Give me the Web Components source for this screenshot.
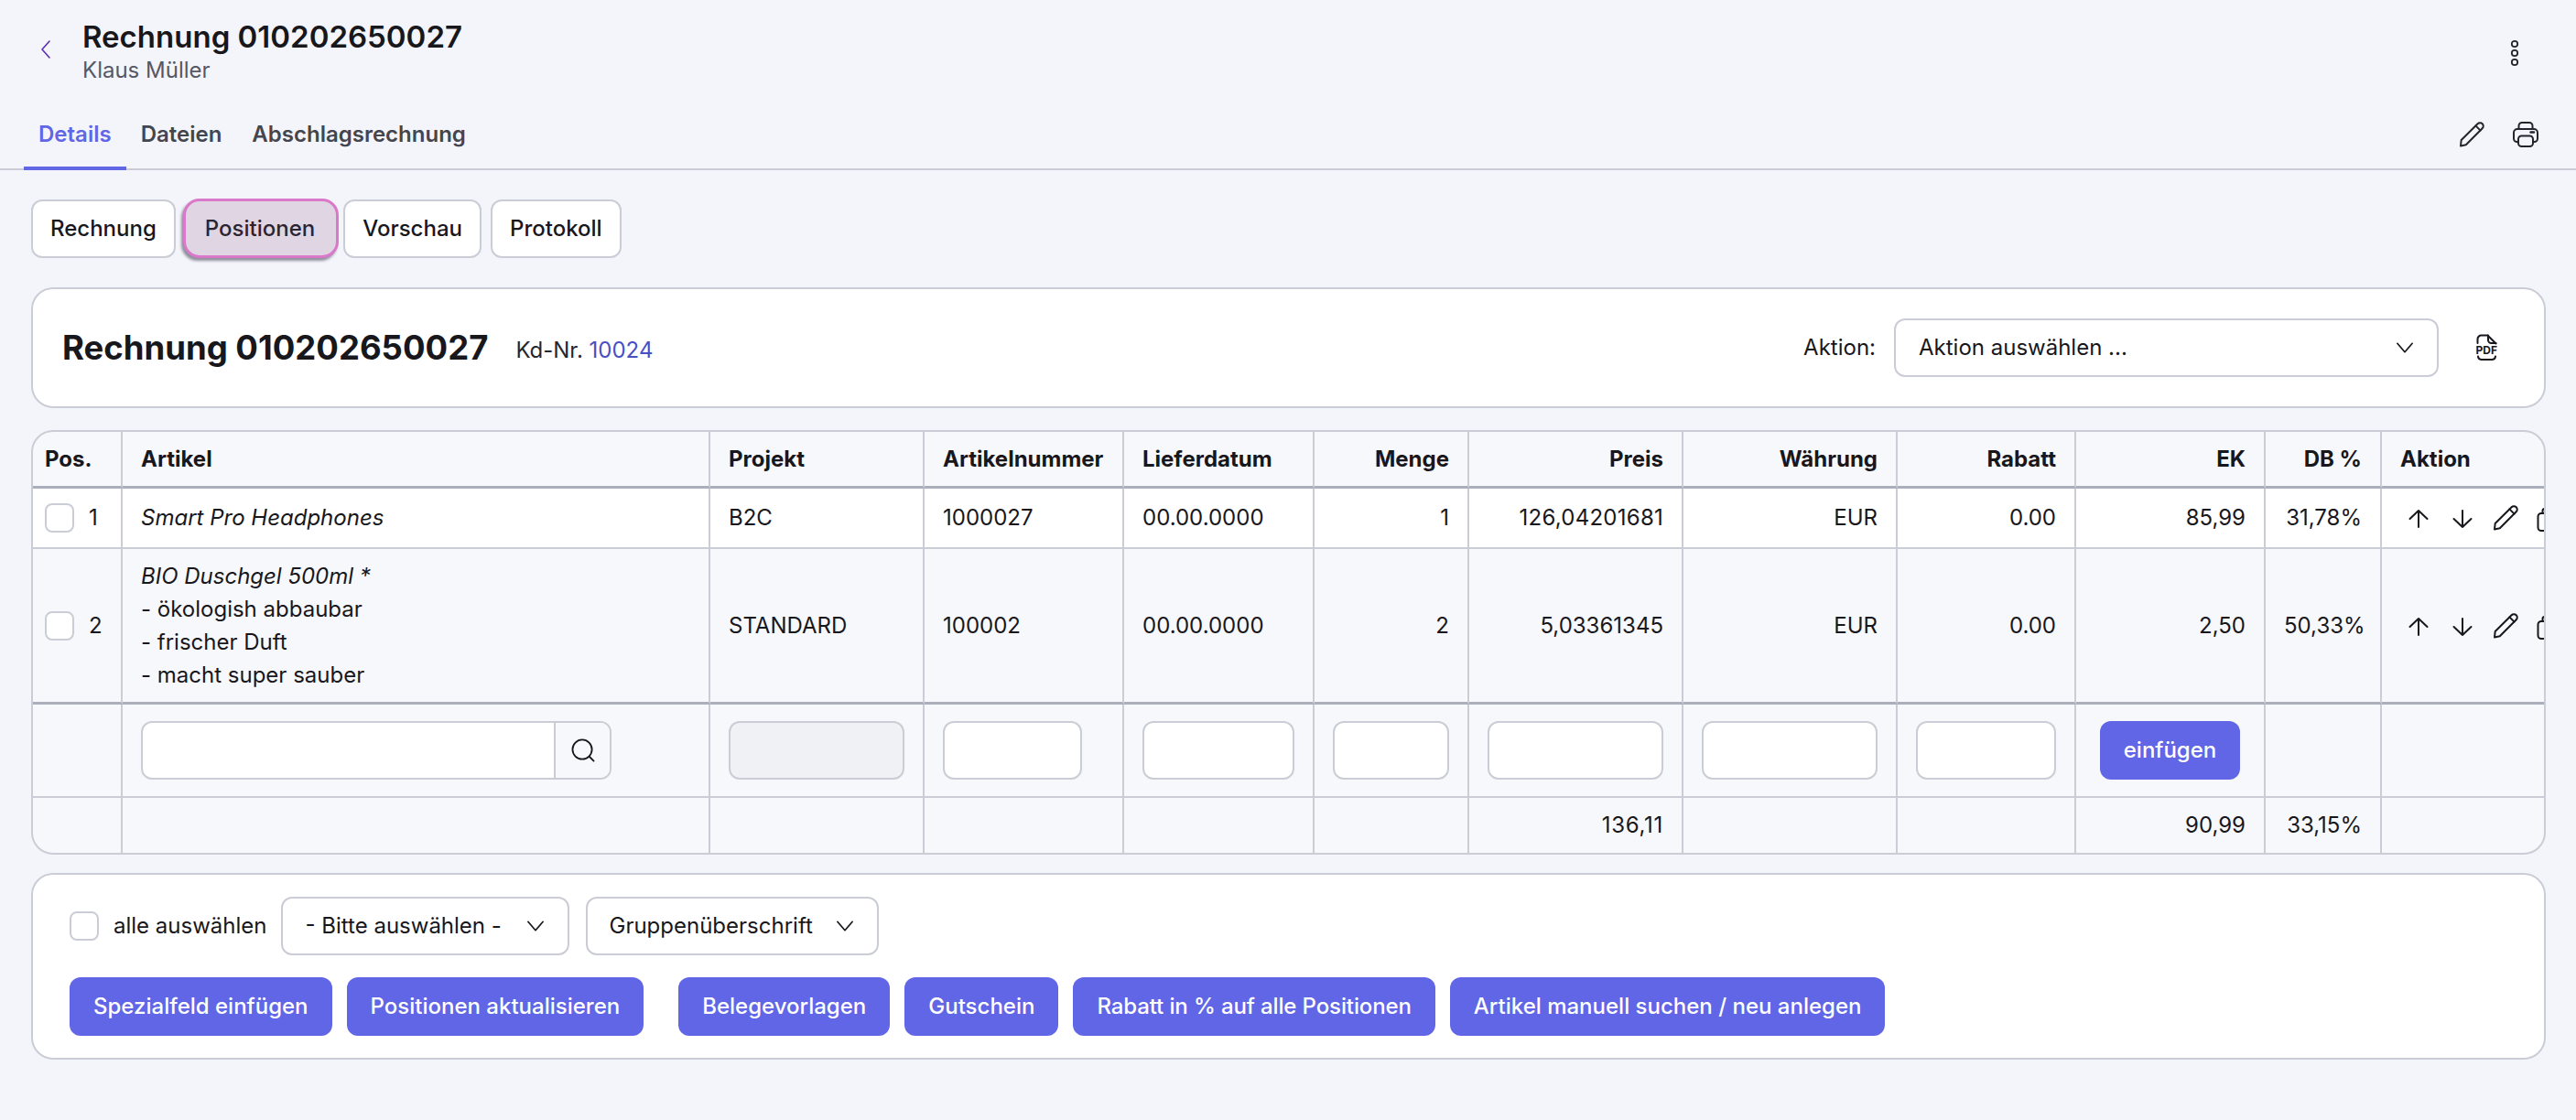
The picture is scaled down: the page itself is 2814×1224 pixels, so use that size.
<!DOCTYPE html>
<html lang="de">
<head>
<meta charset="utf-8">
<title>Rechnung 010202650027</title>
<style>
  html, body { margin: 0; padding: 0; }
  body {
    background: #f4f5fa;
    color: #17171c;
    font: 400 24px/36px Inter, "Liberation Sans", sans-serif;
    height: 1224px;
    overflow: hidden;
  }
</style>
</head>
<body>

<inv-header title="Rechnung 010202650027" subtitle="Klaus Müller"></inv-header>
<inv-tabs></inv-tabs>
<inv-subnav></inv-subnav>
<inv-titlecard number="Rechnung 010202650027" customer="10024"></inv-titlecard>
<inv-positions></inv-positions>
<inv-bulkbar></inv-bulkbar>

<script>
/* Icons share one table so the pages below can just say <ui-icon name="pen"> */
const ICONS = {
  back: '<path d="M9.500 1 1.500 10l8 9" />',
  dots: '<circle cx="15" cy="5" r="3.200"/><circle cx="15" cy="15" r="3.200"/><circle cx="15" cy="25" r="3.200"/>',
  pen: '<path d="M2 27.500 2.700 21 20.600 3.200a3.600 3.600 0 0 1 5.100 0 3.600 3.600 0 0 1 0 5.100L7.800 26.300 2 27.500Z"/><path d="M18.400 5.400l5.200 5.200"/>',
  print: '<path d="M7.500 9V5.500A3.500 3.500 0 0 1 11 2h8a3.500 3.500 0 0 1 3.500 3.500V9"/><path d="M7 23H5.500A3.500 3.500 0 0 1 2 19.500V13a4 4 0 0 1 4-4h18a4 4 0 0 1 4 4v6.500a3.500 3.500 0 0 1-3.500 3.500H23"/><rect x="7" y="16.500" width="16" height="11.500" rx="3.500"/><path d="M20.500 12.500h3.500" stroke-width="2.400"/>',
  up: '<path d="M15 25V7M5.500 16 15 7l9.500 9"/>',
  down: '<path d="M15 7v18M5.500 16l9.500 9 9.500-9"/>',
  copy: '<rect x="1.500" y="10" width="16" height="19" rx="3.500"/><path d="M6.500 10V7.500A2.500 2.500 0 0 1 9 5h11a2.500 2.500 0 0 1 2.500 2.500v13A2.500 2.500 0 0 1 20 23h-2.500"/>',
  search: '<circle cx="12.500" cy="12.500" r="11"/><path d="m20.500 20.500 5 5"/>',
  chevron: '<path d="M1.500 1.500 11 12.500l9.500-11"/>'
};

class UiIcon extends HTMLElement {
  connectedCallback() {
    const name = this.getAttribute('name');
    const w = this.getAttribute('w') || 30, h = this.getAttribute('h') || w;
    const sw = this.getAttribute('sw') || 2;
    const box = this.getAttribute('box') || '0 0 30 30';
    const root = this.attachShadow({ mode: 'open' });
    root.innerHTML = `<style>:host{display:block;flex:none;width:${w}px;height:${h}px;line-height:0}
      svg{display:block;width:100%;height:100%;fill:none;stroke:currentColor;stroke-width:${sw};stroke-linecap:round;stroke-linejoin:round;overflow:visible}</style>
      <svg viewBox="${box}" preserveAspectRatio="xMidYMid meet">${ICONS[name] || ''}</svg>`;
  }
}
customElements.define('ui-icon', UiIcon);

class UiButton extends HTMLElement {
  connectedCallback() {
    const root = this.attachShadow({ mode: 'open' });
    root.innerHTML = `<style>
      :host { display:inline-flex; align-items:center; justify-content:center; box-sizing:border-box;
        height:64px; padding:0 26px; border-radius:12px; background:#6066e6; color:#fff;
        font:500 24px/36px Inter,"Liberation Sans",sans-serif; white-space:nowrap; flex:none; }
    </style><slot></slot>`;
  }
}
customElements.define('ui-button', UiButton);

class UiSegment extends HTMLElement {
  connectedCallback() {
    const root = this.attachShadow({ mode: 'open' });
    root.innerHTML = `<style>
      :host { display:inline-flex; align-items:center; box-sizing:border-box; height:64px; padding:0 19px;
        background:#fff; border:2px solid #cbcdd6; border-radius:12px; color:#17171c;
        font:500 24px/36px Inter,"Liberation Sans",sans-serif; white-space:nowrap; flex:none; }
      :host([active]) { height:65px; margin:-1px -5px 0 -2px; padding:0 23px 0 21px; background:#e0d5e2; border:3px solid #da78c9; border-radius:18px;
        color:#2b2433; box-shadow:-2px 3px 3px rgba(60,60,80,.55); }
    </style><slot></slot>`;
  }
}
customElements.define('ui-segment', UiSegment);

class UiSelect extends HTMLElement {
  connectedCallback() {
    const root = this.attachShadow({ mode: 'open' });
    root.innerHTML = `<style>
      :host { display:inline-flex; align-items:center; justify-content:space-between; box-sizing:border-box;
        height:64px; background:#fff; border:2px solid #cbcdd6; border-radius:12px; color:#17171c;
        font:400 24px/36px Inter,"Liberation Sans",sans-serif; white-space:nowrap; flex:none; padding:0 25px; }
    </style><slot></slot><ui-icon name="chevron" w="20" h="12" sw="2" box="0 0 22 14"></ui-icon>`;
  }
}
customElements.define('ui-select', UiSelect);

class UiCheck extends HTMLElement {
  connectedCallback() {
    const root = this.attachShadow({ mode: 'open' });
    root.innerHTML = `<style>
      :host { display:block; box-sizing:border-box; width:32px; height:32px; flex:none; background:#fff;
        border:2px solid #cbcdd6; border-radius:8px; }
    </style>`;
  }
}
customElements.define('ui-check', UiCheck);

class UiField extends HTMLElement {
  connectedCallback() {
    const root = this.attachShadow({ mode: 'open' });
    root.innerHTML = `<style>
      :host { display:block; box-sizing:border-box; height:64px; background:#fff;
        border:2px solid #cbcdd6; border-radius:12px; }
      :host([disabled]) { background:#f0f1f4; }
    </style>`;
  }
}
customElements.define('ui-field', UiField);

class InvHeader extends HTMLElement {
  connectedCallback() {
    const root = this.attachShadow({ mode: 'open' });
    root.innerHTML = `<style>
      :host { display:flex; box-sizing:border-box; height:112px; padding:20px 52px 0 44px; }
      .back { color:#5b2fb0; margin:24px 34px 0 0; }
      .txt { flex:1; }
      h1 { margin:0; font:600 33px/40px Inter,"Liberation Sans",sans-serif; color:#17171c; }
      p { margin:0; font:400 24px/34px Inter,"Liberation Sans",sans-serif; color:#555866; }
      .more { color:#23242c; margin-top:23px; }
    </style>
    <ui-icon class="back" name="back" w="12" h="20" sw="1.600" box="0 0 11 20"></ui-icon>
    <div class="txt"><h1>${this.getAttribute('title')}</h1><p>${this.getAttribute('subtitle')}</p></div>
    <ui-icon class="more" name="dots" w="30" h="30" sw="1.800"></ui-icon>`;
  }
}
customElements.define('inv-header', InvHeader);

class InvTabs extends HTMLElement {
  connectedCallback() {
    const root = this.attachShadow({ mode: 'open' });
    root.innerHTML = `<style>
      :host { display:flex; box-sizing:border-box; height:74px; padding:0 40px 0 26px; border-bottom:2px solid #cbcdd6;
        font:600 24px/36px Inter,"Liberation Sans",sans-serif; color:#43454f; align-items:stretch; }
      a { display:flex; align-items:center; padding:0 16px 4px; height:74px; box-sizing:border-box; }
      a.on { color:#6066e6; border-bottom:4px solid #6066e6; padding-bottom:0; }
      a:nth-of-type(3) { margin-left:1px; }
      .tools { margin-left:auto; display:flex; gap:28px; align-items:center; color:#23242c; padding-bottom:2px; }
    </style>
    <a class="on">Details</a><a>Dateien</a><a>Abschlagsrechnung</a>
    <div class="tools"><ui-icon name="pen" w="30" h="30"></ui-icon><ui-icon name="print" w="30" h="30"></ui-icon></div>`;
  }
}
customElements.define('inv-tabs', InvTabs);

class InvSubnav extends HTMLElement {
  connectedCallback() {
    const root = this.attachShadow({ mode: 'open' });
    root.innerHTML = `<style>
      :host { display:flex; align-items:flex-start; gap:10px; padding:32px 33px 0 34px; height:128px; box-sizing:border-box; }
    </style>
    <ui-segment>Rechnung</ui-segment><ui-segment active>Positionen</ui-segment><ui-segment>Vorschau</ui-segment><ui-segment>Protokoll</ui-segment>`;
  }
}
customElements.define('inv-subnav', InvSubnav);

class InvTitlecard extends HTMLElement {
  connectedCallback() {
    const root = this.attachShadow({ mode: 'open' });
    root.innerHTML = `<style>
      :host { display:flex; align-items:center; box-sizing:border-box; height:132px; margin:0 33px 0 34px; padding:0 50px 0 32px;
        background:#fff; border:2px solid #cbcdd6; border-radius:24px; }
      h2 { margin:0 30px 0 0; font:700 36.500px/44px Inter,"Liberation Sans",sans-serif; color:#17171c; }
      .kd { font-size:24px; line-height:36px; padding-top:6px; color:#26272e; }
      .kd b { font-weight:400; color:#4a4fc4; }
      .act { margin-left:auto; display:flex; align-items:center; }
      .lbl { margin-right:20px; }
      ui-select { width:595px; }
      svg { display:block; margin-left:40px; width:25px; height:30px; fill:none; stroke:#17171c; stroke-width:2; stroke-linecap:round; stroke-linejoin:round; overflow:visible; }
      text { font:700 12px Inter,"Liberation Sans",sans-serif; fill:#17171c; stroke:none; }
    </style>
    <h2>${this.getAttribute('number')}</h2>
    <div class="kd">Kd-Nr. <b>${this.getAttribute('customer')}</b></div>
    <div class="act">
      <span class="lbl">Aktion:</span>
      <ui-select>Aktion auswählen ...</ui-select>
      <svg viewBox="0 0 25 30"><path d="M2.500 10V5.500A4 4 0 0 1 6.500 1.500h7l9 9"/><path d="M14 1.500v5a3.500 3.500 0 0 0 3.500 3.500H22.500"/><path d="M3 24.500c.3 2 1.700 3.500 4 3.500h11c2.300 0 3.700-1.500 4-3.500"/><text x="0.500" y="22">PDF</text></svg>
    </div>`;
  }
}
customElements.define('inv-titlecard', InvTitlecard);

class InvPositions extends HTMLElement {
  connectedCallback() {
    const root = this.attachShadow({ mode: 'open' });
    const acts = `<div class="acts"><ui-icon name="up"></ui-icon><ui-icon name="down"></ui-icon><ui-icon name="pen"></ui-icon><ui-icon name="copy"></ui-icon></div>`;
    root.innerHTML = `<style>
      :host { display:block; box-sizing:border-box; margin:24px 33px 0 34px; border:2px solid #cbcdd6; border-radius:24px;
        overflow:hidden; background:#f7f8fb; }
      table { width:2743px; table-layout:fixed; border-collapse:separate; border-spacing:0; font:400 24px/36px Inter,"Liberation Sans",sans-serif; color:#17171c; }
      th, td { box-sizing:border-box; padding:0 20px; border-right:2px solid #cbcdd6; border-bottom:2px solid #cbcdd6; text-align:left; vertical-align:middle; overflow:hidden; white-space:nowrap; }
      th:last-child, td:last-child { border-right:0; }
      th { height:62px; font-weight:700; border-bottom:3px solid #abafbc; }
      .r { text-align:right; }
      tr.one td { height:66px; background:#fff; }
      tr.two td { height:170px; border-bottom:3px solid #abafbc; }
      tr.add td { height:102px; }
      tr.sum td { height:60px; border-bottom:0; }
      .pos { display:flex; align-items:center; gap:16px; }
      .nopad { padding:0 0 0 13px; }
      .acts { display:flex; gap:18px; padding-left:5px; color:#17171c; }
      .search { display:flex; box-sizing:border-box; width:514px; height:64px; background:#fff; border:2px solid #cbcdd6; border-radius:12px; overflow:hidden; }
      .search i { flex:1; }
      .search span { box-sizing:border-box; width:61px; border-left:2px solid #cbcdd6; background:#f7f8fb; display:flex; align-items:center; justify-content:center; color:#17171c; }
      .it { font-style:italic; }
      .nowrapbtn { text-align:center; padding:0; }
      .art { width:152px; }
    </style>
    <table>
      <colgroup><col style="width:98px"><col style="width:642px"><col style="width:234px"><col style="width:218px"><col style="width:208px"><col style="width:169px"><col style="width:234px"><col style="width:234px"><col style="width:195px"><col style="width:207px"><col style="width:127px"><col style="width:177px"></colgroup>
      <tr>
        <th class="nopad">Pos.</th><th>Artikel</th><th>Projekt</th><th>Artikelnummer</th><th>Lieferdatum</th>
        <th class="r">Menge</th><th class="r">Preis</th><th class="r">Währung</th><th class="r">Rabatt</th><th class="r">EK</th><th class="r">DB %</th><th>Aktion</th>
      </tr>
      <tr class="one">
        <td class="nopad"><div class="pos"><ui-check></ui-check>1</div></td>
        <td class="it">Smart Pro Headphones</td><td>B2C</td><td>1000027</td><td>00.00.0000</td>
        <td class="r">1</td><td class="r" style="letter-spacing:.25px">126,04201681</td><td class="r">EUR</td><td class="r">0.00</td><td class="r">85,99</td><td class="r">31,78%</td>
        <td>${acts}</td>
      </tr>
      <tr class="two">
        <td class="nopad"><div class="pos"><ui-check></ui-check>2</div></td>
        <td><div class="it">BIO Duschgel 500ml *</div><div>- ökologish abbaubar</div><div>- frischer Duft</div><div>- macht super sauber</div></td>
        <td>STANDARD</td><td>100002</td><td>00.00.0000</td>
        <td class="r">2</td><td class="r">5,03361345</td><td class="r">EUR</td><td class="r">0.00</td><td class="r">2,50</td><td class="r">50,33%</td>
        <td>${acts}</td>
      </tr>
      <tr class="add">
        <td></td>
        <td><div class="search"><i></i><span><ui-icon name="search" w="26" h="26" sw="1.900" box="0 0 27 27"></ui-icon></span></div></td>
        <td><ui-field disabled></ui-field></td><td><ui-field class="art"></ui-field></td><td><ui-field></ui-field></td>
        <td><ui-field></ui-field></td><td><ui-field></ui-field></td><td><ui-field></ui-field></td><td><ui-field></ui-field></td>
        <td class="nowrapbtn"><ui-button>einfügen</ui-button></td><td></td><td></td>
      </tr>
      <tr class="sum">
        <td></td><td></td><td></td><td></td><td></td><td></td><td class="r" style="letter-spacing:.7px">136,11</td><td></td><td></td><td class="r">90,99</td><td class="r">33,15%</td><td></td>
      </tr>
    </table>`;
  }
}
customElements.define('inv-positions', InvPositions);

class InvBulkbar extends HTMLElement {
  connectedCallback() {
    const root = this.attachShadow({ mode: 'open' });
    root.innerHTML = `<style>
      :host { display:flex; flex-direction:column; gap:24px; box-sizing:border-box; height:204px; margin:20px 33px 0 34px; padding:24px 40px 0;
        background:#fff; border:2px solid #cbcdd6; border-radius:24px; }
      .row { display:flex; align-items:center; gap:16px; }
      .sel1 { width:315px; padding:0 25px 0 24px; }
      .sel2 { width:320px; padding:0 25px 0 23px; margin-left:2px; }
      .sp { width:6px; flex:none; }
      .tight { letter-spacing:-.12px; }
    </style>
    <div class="row">
      <ui-check></ui-check><span>alle auswählen</span>
      <ui-select class="sel1">- Bitte auswählen -</ui-select>
      <ui-select class="sel2">Gruppenüberschrift</ui-select>
    </div>
    <div class="row">
      <ui-button>Spezialfeld einfügen</ui-button>
      <ui-button>Positionen aktualisieren</ui-button>
      <span class="sp"></span>
      <ui-button>Belegevorlagen</ui-button>
      <ui-button>Gutschein</ui-button>
      <ui-button class="tight">Rabatt in % auf alle Positionen</ui-button>
      <ui-button>Artikel manuell suchen / neu anlegen</ui-button>
    </div>`;
  }
}
customElements.define('inv-bulkbar', InvBulkbar);
</script>
</body>
</html>
